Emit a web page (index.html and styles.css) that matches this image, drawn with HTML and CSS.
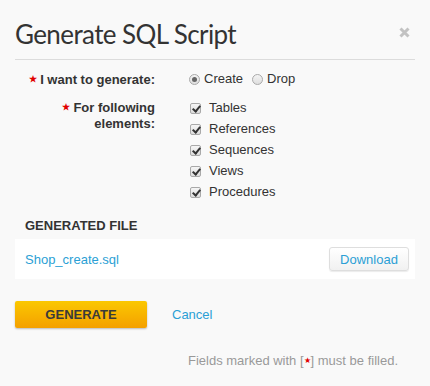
FILE: index.html
```html
<!DOCTYPE html>
<html lang="en">
<head>
    <meta charset="UTF-8">
    <title>Generate SQL Script</title>
    <link rel="stylesheet" href="styles.css">
</head>
<body>
    <div class="dialog">
        <div class="dialog-header">
            <h1>Generate SQL Script</h1>
            <svg class="close" width="11" height="11" viewBox="0 0 11 11">
                <path d="M1.5 1.5 L9.5 9.5 M9.5 1.5 L1.5 9.5" stroke="#c2c2c2" stroke-width="3" stroke-linecap="butt"/>
            </svg>
        </div>

        <div class="form-row">
            <label class="form-label"><span class="star">&#9733;</span> I want to generate:</label>
            <div class="radios">
                <label class="radio"><input type="radio" name="mode" checked> Create</label>
                <label class="radio"><input type="radio" name="mode"> Drop</label>
            </div>
        </div>

        <div class="form-row">
            <label class="form-label"><span class="star">&#9733;</span> For following<br>elements:</label>
            <div class="checks">
                <label class="check"><input type="checkbox" checked> Tables</label>
                <label class="check"><input type="checkbox" checked> References</label>
                <label class="check"><input type="checkbox" checked> Sequences</label>
                <label class="check"><input type="checkbox" checked> Views</label>
                <label class="check"><input type="checkbox" checked> Procedures</label>
            </div>
        </div>

        <h2 class="section-title">GENERATED FILE</h2>
        <div class="file-box">
            <a href="#" class="file-link">Shop_create.sql</a>
            <button class="download-button">Download</button>
        </div>

        <div class="actions">
            <button class="generate-button">GENERATE</button>
            <a href="#" class="cancel-link">Cancel</a>
        </div>

        <p class="note">Fields marked with [<span class="star">&#9733;</span>] must be filled.</p>
    </div>
</body>
</html>
```

FILE: styles.css
```css
body {
    margin: 0;
    background: #f9f9f9;
    font-family: "Liberation Sans", Arial, sans-serif;
    font-size: 13px;
    color: #333;
}

.dialog {
    padding: 0 15px;
}

.dialog-header {
    display: flex;
    justify-content: space-between;
    align-items: flex-start;
    border-bottom: 1px solid #dcdcdc;
    height: 59px;
}

.dialog-header h1 {
    margin: 18px 0 0;
    font-family: Lato, sans-serif;
    font-weight: 400;
    font-size: 26px;
    letter-spacing: -0.6px;
    color: #333;
}

.close {
    margin: 27px 5px 0 0;
}

.form-row {
    display: grid;
    grid-template-columns: 140px 1fr;
    column-gap: 34px;
    margin-top: 10px;
}

.form-label {
    text-align: right;
    font-weight: bold;
    font-size: 13px;
    line-height: 16px;
    padding-top: 1px;
}

.star {
    color: #e10000;
    font-size: 9px;
    vertical-align: 2px;
}

.radios {
    display: flex;
    gap: 9px;
    line-height: 18px;
}

.radio, .check {
    display: flex;
    align-items: center;
    font-size: 13px;
}

.radio input {
    appearance: none;
    margin: 0 4px 0 0;
    width: 11px;
    height: 11px;
    border: 1px solid #a9a9a9;
    border-radius: 50%;
    background: linear-gradient(#f4f4f4, #dedede);
    display: grid;
    place-content: center;
}

.radio input:checked::before {
    content: "";
    width: 5px;
    height: 5px;
    border-radius: 50%;
    background: #666;
}

.checks {
    display: flex;
    flex-direction: column;
    gap: 5px;
    padding-top: 2px;
}

.check {
    line-height: 16px;
}

.check input {
    appearance: none;
    margin: 0 8px 0 1px;
    width: 11px;
    height: 11px;
    border: 1px solid #a9a9a9;
    border-radius: 2px;
    background: linear-gradient(#f6f6f6, #dcdcdc);
    position: relative;
}

.check input:checked::after {
    content: "";
    position: absolute;
    left: 3px;
    top: 0px;
    width: 3px;
    height: 6px;
    border: solid #333;
    border-width: 0 2px 2px 0;
    transform: rotate(40deg);
}

.section-title {
    margin: 18px 0 0 10px;
    font-size: 13px;
    font-weight: bold;
    color: #333;
    line-height: 16px;
}

.file-box {
    margin-top: 5px;
    background: white;
    height: 40px;
    padding: 0 6px 0 10px;
    display: flex;
    justify-content: space-between;
    align-items: center;
}

.file-link, .cancel-link {
    color: #2b9fd5;
    text-decoration: none;
    font-size: 13px;
}

.download-button {
    font-family: "Liberation Sans", Arial, sans-serif;
    font-size: 13px;
    color: #2b9fd5;
    background: linear-gradient(#ffffff, #f1f1f1);
    border: 1px solid #dedede;
    border-radius: 3px;
    box-shadow: 0 1px 1px rgba(0, 0, 0, 0.08);
    width: 80px;
    height: 24px;
    padding: 0;
}

.actions {
    display: flex;
    align-items: center;
    gap: 25px;
    margin-top: 22px;
}

.generate-button {
    font-family: "Liberation Sans", Arial, sans-serif;
    font-weight: bold;
    font-size: 13px;
    color: #3a3a3a;
    background: linear-gradient(#fbc800, #f4a000);
    border: none;
    border-radius: 2px;
    box-shadow: 0 1px 2px rgba(0, 0, 0, 0.25);
    width: 132px;
    height: 27px;
}

.note {
    margin: 25px 17px 0 0;
    text-align: right;
    color: #999;
    font-size: 13px;
}

.note .star {
    font-size: 8px;
}
```
